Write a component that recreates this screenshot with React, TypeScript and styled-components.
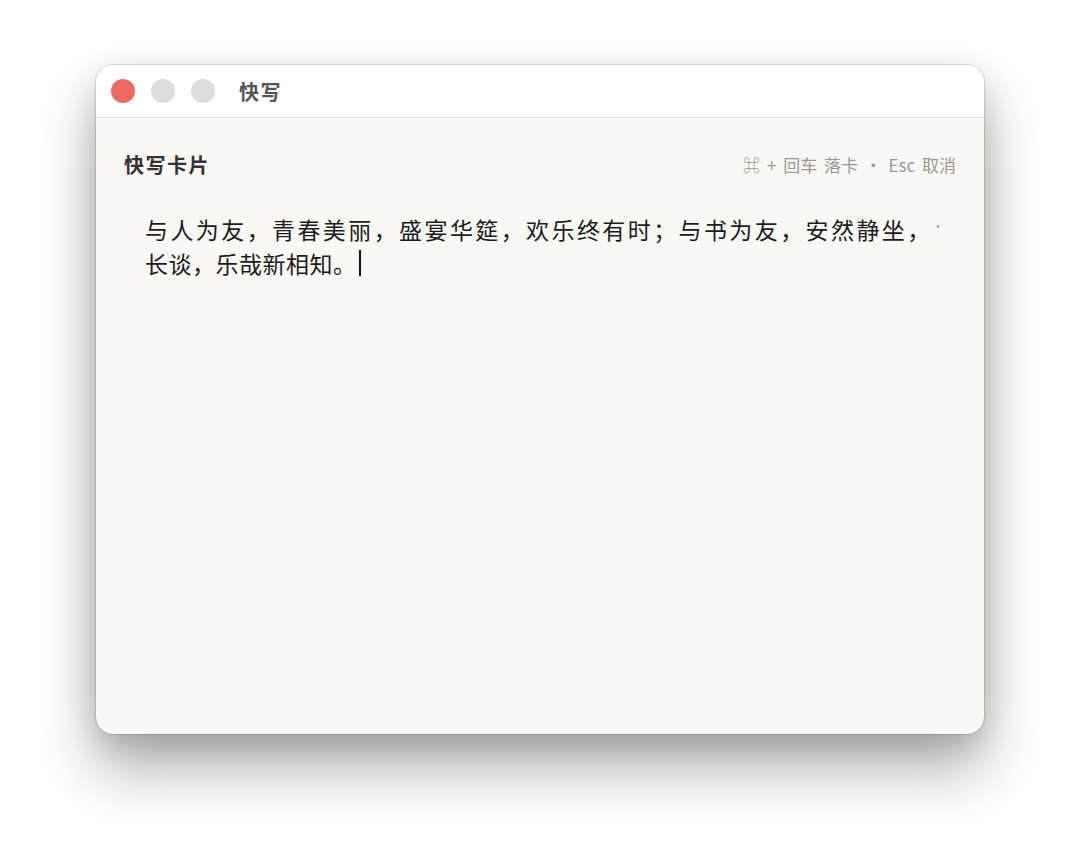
import React from "react";
import styled, {createGlobalStyle} from "styled-components";

const GlobalStyle = createGlobalStyle`
  html, body {
    margin: 0;
    padding: 0;
    background: #ffffff;
  }
  body {
    font-family: "Noto Sans", "Noto Sans CJK SC", sans-serif;
  }
`;

const Page = styled.div`
  width: 1080px;
  height: 861px;
  padding: 65px 0 0 96px;
  box-sizing: border-box;
  overflow: hidden;
`;

const Window = styled.div`
  width: 888px;
  height: 669px;
  border-radius: 17px;
  background: #f9f8f5;
  display: flex;
  flex-direction: column;
  overflow: hidden;
  box-shadow:
    0 0 0 1px rgba(0, 0, 0, 0.12),
    0 34px 60px rgba(0, 0, 0, 0.32),
    0 10px 30px rgba(0, 0, 0, 0.12);
`;

const TitleBar = styled.div`
  height: 52px;
  flex-shrink: 0;
  background: #ffffff;
  border-bottom: 1px solid #e3e2df;
  display: flex;
  align-items: center;
  padding-left: 15px;
  gap: 16px;
`;

const Lights = styled.div`
  display: flex;
  gap: 16px;
`;

const Light = styled.span<{ $color: string }>`
  width: 24px;
  height: 24px;
  border-radius: 50%;
  background: ${p => p.$color};
`;

const WindowTitle = styled.div`
  margin-left: 8px;
  font-size: 20px;
  letter-spacing: 1.5px;
  font-weight: 700;
  color: #555555;
  font-family: "Noto Sans CJK SC", sans-serif;
`;

const Body = styled.div`
  flex: 1;
  padding: 30px 28px 0 28px;
  display: flex;
  flex-direction: column;
`;

const Header = styled.div`
  display: flex;
  justify-content: space-between;
  align-items: center;
  height: 32px;
`;

const CardTitle = styled.div`
  font-family: "Noto Sans CJK SC", sans-serif;
  font-size: 20px;
  letter-spacing: 1.5px;
  font-weight: 700;
  color: #333333;
`;

const Hint = styled.div`
  font-family: "Noto Sans CJK SC", sans-serif;
  font-size: 17px;
  color: #9a9894;
  word-spacing: 3px;
`;

const Editor = styled.div`
  margin-top: 32px;
  padding-left: 21px;
  font-family: "Noto Sans CJK SC", sans-serif;
  font-size: 23px;
  font-weight: 400;
  line-height: 34px;
  color: #1c1c1c;
  position: relative;
`;

const Line = styled.div<{ $justify?: boolean }>`
  white-space: nowrap;
  width: ${p => (p.$justify ? "786px" : "auto")};
  letter-spacing: 0.5px;
  display: flex;
  align-items: center;
`;

const Stretch = styled.span`
  flex: 1;
  display: flex;
  justify-content: space-between;
`;

const Clipped = styled.span`
  position: absolute;
  left: 813px;
  top: 13px;
  width: 2px;
  height: 3px;
  background: #9a9894;
  border-radius: 1px;
`;

const Caret = styled.span`
  display: inline-block;
  width: 2px;
  height: 26px;
  background: #111111;
  margin-left: 2px;
`;

const firstLine = "与人为友，青春美丽，盛宴华筵，欢乐终有时；与书为友，安然静坐，";

export default function App() {
  return (
    <>
      <GlobalStyle/>
      <Page>
        <Window>
          <TitleBar>
            <Lights>
              <Light $color="#ee6a60"/>
              <Light $color="#dcdcdc"/>
              <Light $color="#dcdcdc"/>
            </Lights>
            <WindowTitle>快写</WindowTitle>
          </TitleBar>
          <Body>
            <Header>
              <CardTitle>快写卡片</CardTitle>
              <Hint>⌘ + 回车 落卡 · Esc 取消</Hint>
            </Header>
            <Editor>
              <Line $justify>
                <Stretch>
                  {firstLine.split("").map((c, i) => <span key={i}>{c}</span>)}
                </Stretch>
              </Line>
              <Line>长谈，乐哉新相知。<Caret/></Line>
              <Clipped/>
            </Editor>
          </Body>
        </Window>
      </Page>
    </>
  );
}
